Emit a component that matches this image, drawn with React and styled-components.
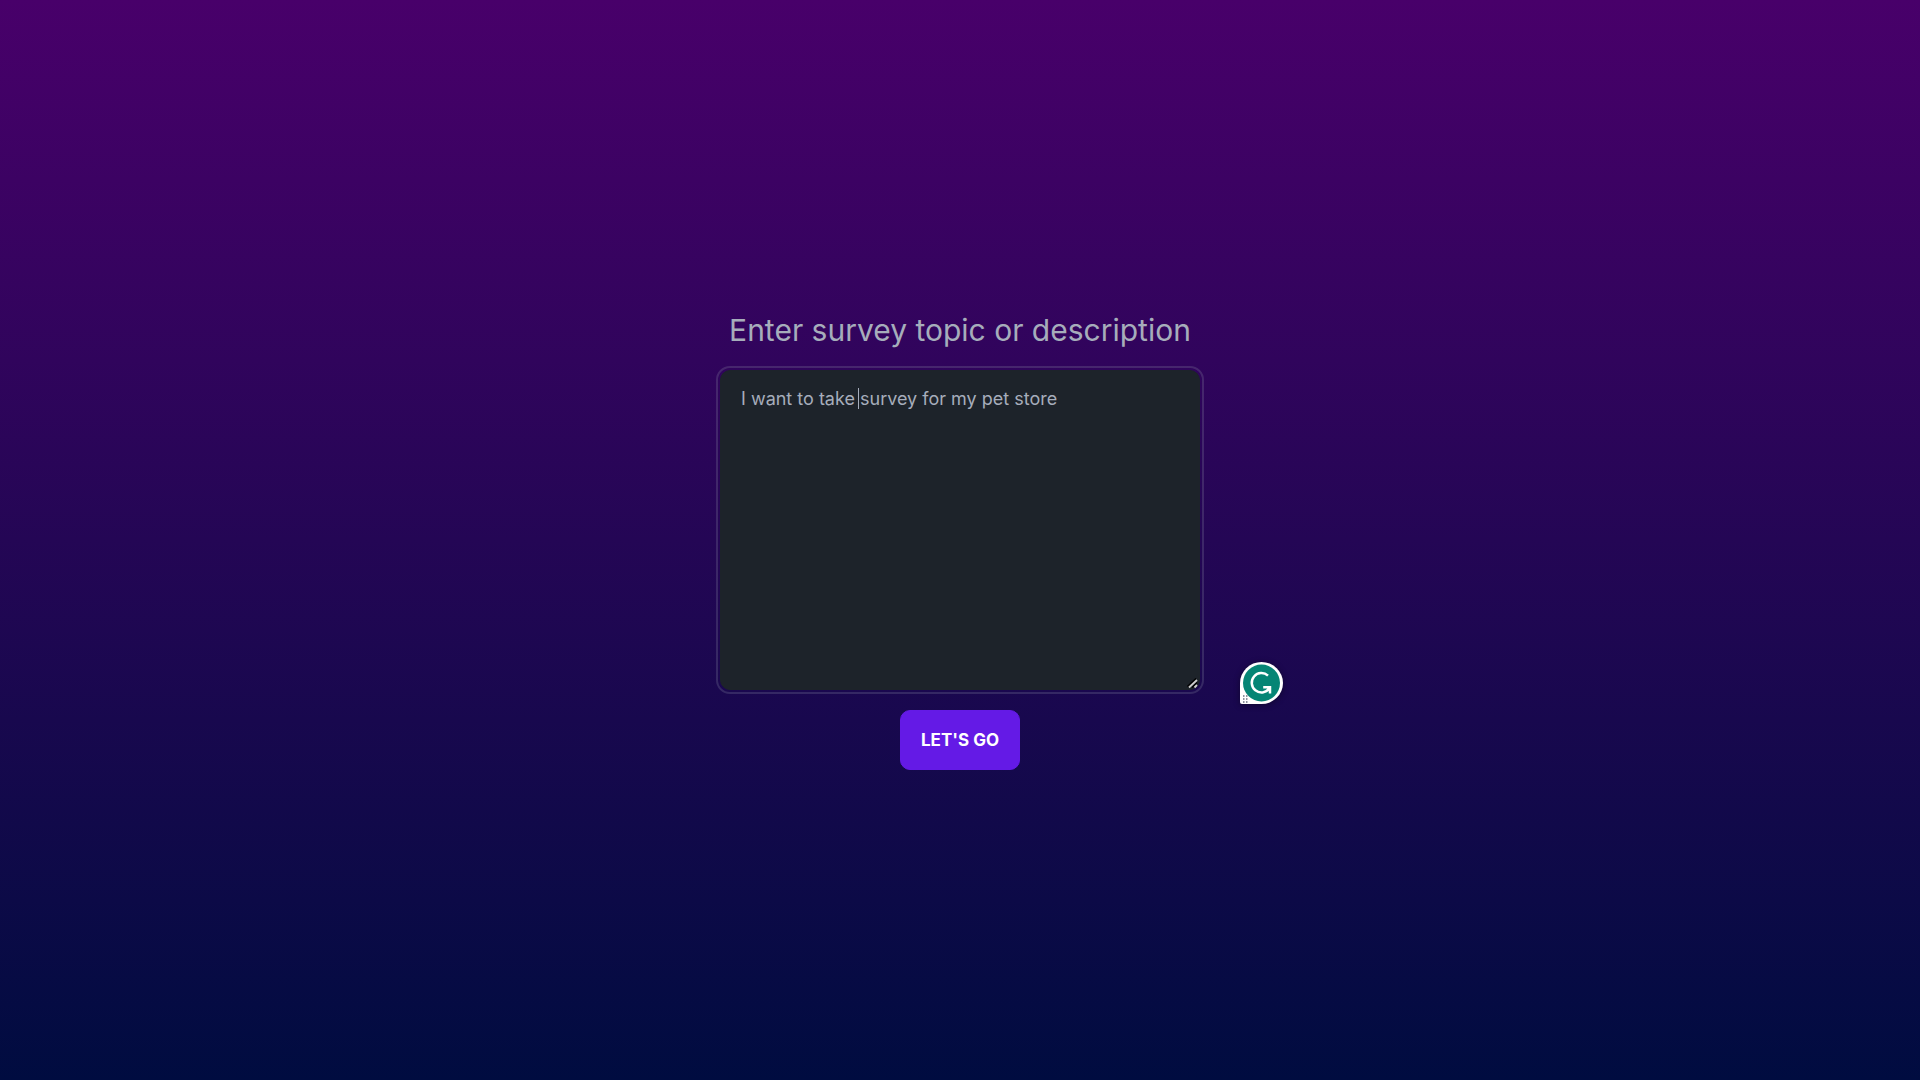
import React from "react";
import styled, { createGlobalStyle } from "styled-components";

const GlobalStyle = createGlobalStyle`
  *, *::before, *::after { box-sizing: border-box; }
  html { color-scheme: dark; }
  body { margin: 0; font-family: Inter, "Liberation Sans", sans-serif; }
`;

const Page = styled.main`
  min-height: 100vh;
  display: flex;
  align-items: center;
  justify-content: center;
  background: linear-gradient(to bottom, #48006a, #000c40);
  color: #a6adbb;
`;

const Form = styled.form`
  width: 100%;
  max-width: 480px;
  display: flex;
  flex-direction: column;
  align-items: center;
  gap: 20px;
`;

const Title = styled.label`
  font-size: 30px;
  line-height: 40px;
  white-space: nowrap;
`;

const Field = styled.div`
  position: relative;
  width: 100%;
`;

const gripIcon = encodeURIComponent(
  `<svg xmlns="http://www.w3.org/2000/svg" width="15" height="15" fill="none">
    <path d="M3.5 12.5L12 4.5M8 13.5L13 8.5" stroke="#000" stroke-width="1.6"/>
    <path d="M5 13.5L13 6M10.5 13.5L13 11" stroke="#ccc" stroke-width="1.8"/>
  </svg>`
);

const TopicInput = styled.textarea`
  display: block;
  width: 100%;
  height: 320px;
  padding: 15px 20px;
  border: 1px solid #1d232a;
  border-radius: 10px;
  outline: 2px solid rgba(166, 173, 187, 0.2);
  outline-offset: 2px;
  background: #1d232a;
  color: inherit;
  font: 400 18px/25px Inter, "Liberation Sans", sans-serif;

  &::-webkit-resizer {
    background: url("data:image/svg+xml,${gripIcon}") no-repeat;
  }
`;

const Caret = styled.span`
  position: absolute;
  top: 18px;
  left: 138px;
  width: 1px;
  height: 21px;
  background: #a6adbb;
`;

const SubmitButton = styled.button`
  height: 60px;
  padding: 0 20px;
  border: 1px solid #641ae6;
  border-radius: 10px;
  background: #641ae6;
  color: #fff;
  font: 700 17px/20px Inter, "Liberation Sans", sans-serif;
  text-transform: uppercase;
`;

const AssistantButton = styled.button`
  position: absolute;
  left: calc(100% + 40px);
  bottom: -14px;
  width: 43px;
  height: 42px;
  padding: 0;
  border: 0;
  background: none;
  filter: drop-shadow(0 1px 3px rgba(0, 0, 0, 0.4));

  svg { display: block; }
`;

function AssistantLogo() {
  return (
    <svg width="43" height="42" viewBox="0 0 43 42" aria-hidden="true">
      <path d="M0 21A21.5 21 0 1 1 21.5 42H2a2 2 0 0 1-2-2Z" fill="#fff" />
      <circle cx="21.5" cy="21" r="18.5" fill="#058575" />
      <path
        d="M28 13.6A9.7 9.7 0 1 0 29.2 26.6L30 25.3M23.2 25.3H30V31.6"
        fill="none"
        stroke="#fff"
        strokeWidth="2.5"
      />
      <path d="M3 34h1.5M6 34h1.5M3 37h1.5M6 37h1.5M3 40h1.5M6 40h1.5" stroke="#6b7080" strokeWidth="1.5" />
    </svg>
  );
}

export default function App() {
  return (
    <>
      <GlobalStyle />
      <Page>
        <Form onSubmit={(event) => event.preventDefault()}>
          <Title htmlFor="topic">Enter survey topic or description</Title>
          <Field>
            <TopicInput
              id="topic"
              spellCheck={false}
              defaultValue="I want to take survey for my pet store"
            />
            <Caret aria-hidden="true" />
            <AssistantButton type="button" aria-label="Writing assistant">
              <AssistantLogo />
            </AssistantButton>
          </Field>
          <SubmitButton type="submit">Let's go</SubmitButton>
        </Form>
      </Page>
    </>
  );
}
